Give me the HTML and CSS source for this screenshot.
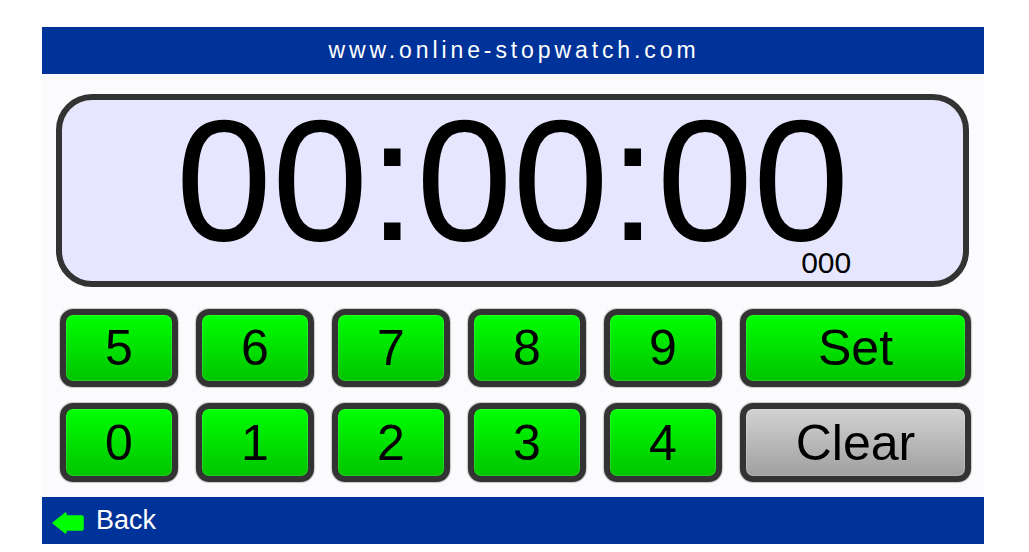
FILE: index.html
```html
<!DOCTYPE html>
<html>
<head>
<meta charset="utf-8">
<link rel="stylesheet" href="styles.css">
</head>
<body>
<div class="app">
  <header class="topbar">www.online-stopwatch.com</header>
  <main class="panel">
    <div class="display">
      <div class="readout">
        <div class="time">00:00:00</div>
        <div class="ms">000</div>
      </div>
    </div>
    <div class="keys">
      <button class="key">5</button>
      <button class="key">6</button>
      <button class="key">7</button>
      <button class="key">8</button>
      <button class="key">9</button>
      <button class="key">Set</button>
      <button class="key">0</button>
      <button class="key">1</button>
      <button class="key">2</button>
      <button class="key">3</button>
      <button class="key">4</button>
      <button class="key key-grey">Clear</button>
    </div>
  </main>
  <footer class="bottombar">
    <svg class="back-arrow" width="32" height="22" viewBox="0 0 32 22">
      <path d="M1 11 L13.5 1 L14.5 4 L30 4 Q31 4 31 5 L31 17 Q31 18 30 18 L14.5 18 L13.5 21 Z" fill="#00ff00" stroke="#00ff00" stroke-width="1.5" stroke-linejoin="round"/>
    </svg>
    <span class="back-label">Back</span>
  </footer>
</div>
</body>
</html>
```

FILE: styles.css
```css
html, body {
  margin: 0;
  padding: 0;
  background: #ffffff;
}

body {
  font-family: "Liberation Sans", Arial, sans-serif;
}

.app {
  width: 942px;
  margin: 27px 0 0 42px;
  display: flex;
  flex-direction: column;
}

.topbar {
  height: 47px;
  background: #003399;
  color: #ffffff;
  font-size: 23px;
  letter-spacing: 3.9px;
  display: flex;
  align-items: center;
  justify-content: center;
  padding-left: 2px;
  padding-bottom: 1px;
  box-sizing: border-box;
}

.panel {
  background: #fbfbfe;
  padding: 20px 15px 15px 14px;
  display: flex;
  flex-direction: column;
}

.display {
  height: 193px;
  box-sizing: border-box;
  border: 6px solid #333333;
  border-radius: 36px;
  background: #e6e7fe;
  display: flex;
  justify-content: center;
  padding-top: 12px;
}

.readout {
  display: flex;
  flex-direction: column;
  align-items: flex-end;
}

.time {
  font-size: 173px;
  line-height: 136px;
  color: #000000;
}

.ms {
  font-size: 30px;
  line-height: 30px;
  margin-right: -2px;
  color: #000000;
}

.keys {
  margin-top: 22px;
  margin-left: 4px;
  display: grid;
  grid-template-columns: repeat(5, 118px) 231px;
  grid-template-rows: 78px 79px;
  column-gap: 18px;
  row-gap: 16px;
}

.key {
  font-family: "Liberation Sans", Arial, sans-serif;
  font-size: 50px;
  color: #000000;
  padding: 0;
  margin: 0;
  box-sizing: border-box;
  border: 6px solid #333333;
  border-radius: 13px;
  background: linear-gradient(#00ff00, #00c400);
  box-shadow: 0 0 1px 1px rgba(0, 0, 0, 0.2), inset 0 0 0 1px rgba(255, 255, 255, 0.15);
  display: flex;
  align-items: center;
  justify-content: center;
  line-height: 1;
}

.key-grey {
  background: linear-gradient(#d2d2d2, #a0a0a0);
}

.bottombar {
  height: 47px;
  background: #003399;
  display: flex;
  align-items: center;
  gap: 12px;
  padding-left: 10px;
  box-sizing: border-box;
}

.back-arrow {
  display: block;
  margin-top: 4px;
}

.back-label {
  color: #ffffff;
  font-size: 27px;
  line-height: 1;
  margin-top: -1px;
}
```
